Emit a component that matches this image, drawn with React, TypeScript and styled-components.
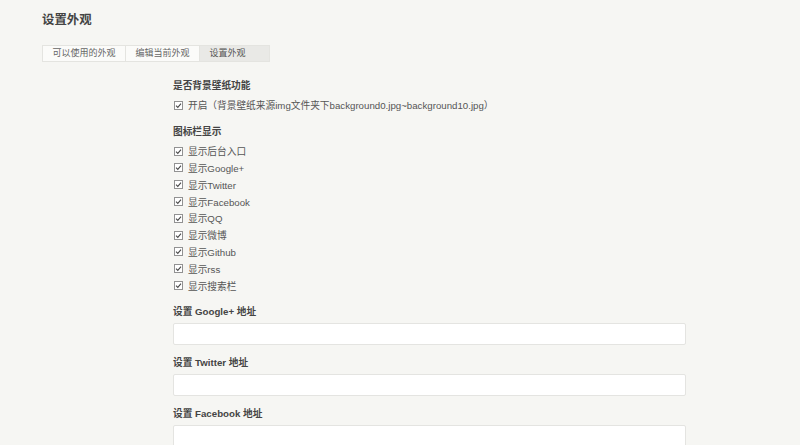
import React from "react";
import styled, { createGlobalStyle } from "styled-components";

const Global = createGlobalStyle`
  html, body { margin: 0; padding: 0; }
  body {
    background: #f6f6f3;
    color: #444;
    font-family: "Liberation Sans", Arial, "Noto Sans CJK SC", sans-serif;
    font-size: 9.7px;
  }
  * { box-sizing: border-box; }
`;

const Page = styled.main`
  padding: 10px 0 0 42px;
`;

const Title = styled.h2`
  margin: 0;
  font-size: 12.4px;
  line-height: 20px;
  font-weight: bold;
  color: #444;
`;

const Tabs = styled.ul`
  list-style: none;
  margin: 15px 0 0;
  padding: 0;
  display: flex;
`;

const Tab = styled.li<{ $active?: boolean }>`
  height: 17px;
  line-height: 15px;
  padding: 0 9.5px;
  min-width: ${(p) => (p.$active ? "71px" : "0")};
  font-size: 9px;
  color: ${(p) => (p.$active ? "#555" : "#666")};
  background: ${(p) => (p.$active ? "#e9e9e6" : "#fbfbf9")};
  border: 1px solid #e4e4e0;
  & + & { margin-left: -1px; }
`;

const Form = styled.form`
  margin: 16px 0 0 131px;
  width: 513px;
  display: flex;
  flex-direction: column;
  gap: 10px;
`;

const Option = styled.section`
  display: flex;
  flex-direction: column;
`;

const Label = styled.div`
  font-weight: bold;
  line-height: 16px;
  margin-bottom: 3px;
  color: #444;
`;

const CheckRow = styled.label`
  display: flex;
  align-items: center;
  height: 16.8px;
  color: #555;
  gap: 5px;
`;

const Box = styled.svg`
  flex: none;
  width: 9px;
  height: 9px;
  margin-left: 1px;
`;

const Input = styled.input`
  height: 22px;
  width: 100%;
  border: 1px solid #e4e4e1;
  border-radius: 2px;
  background: #fff;
  outline: none;
`;

const Check = ({ text }: { text: string }) => (
  <CheckRow>
    <Box viewBox="0 0 9 9">
      <rect x="0.5" y="0.5" width="8" height="8" fill="#fff" stroke="#929292" />
      <path d="M2 4.6 L3.8 6.4 L7 2.6" fill="none" stroke="#4a4a4a" strokeWidth="1.1" />
    </Box>
    <span>{text}</span>
  </CheckRow>
);

const icons = [
  "显示后台入口",
  "显示Google+",
  "显示Twitter",
  "显示Facebook",
  "显示QQ",
  "显示微博",
  "显示Github",
  "显示rss",
  "显示搜索栏",
];

export default function App() {
  return (
    <>
      <Global />
      <Page>
        <Title>设置外观</Title>
        <Tabs>
          <Tab>可以使用的外观</Tab>
          <Tab>编辑当前外观</Tab>
          <Tab $active>设置外观</Tab>
        </Tabs>
        <Form>
          <Option>
            <Label>是否背景壁纸功能</Label>
            <Check text="开启（背景壁纸来源img文件夹下background0.jpg~background10.jpg）" />
          </Option>
          <Option>
            <Label>图标栏显示</Label>
            {icons.map((t) => (
              <Check key={t} text={t} />
            ))}
          </Option>
          <Option>
            <Label>设置 Google+ 地址</Label>
            <Input type="text" />
          </Option>
          <Option>
            <Label>设置 Twitter 地址</Label>
            <Input type="text" />
          </Option>
          <Option>
            <Label>设置 Facebook 地址</Label>
            <Input type="text" />
          </Option>
        </Form>
      </Page>
    </>
  );
}
